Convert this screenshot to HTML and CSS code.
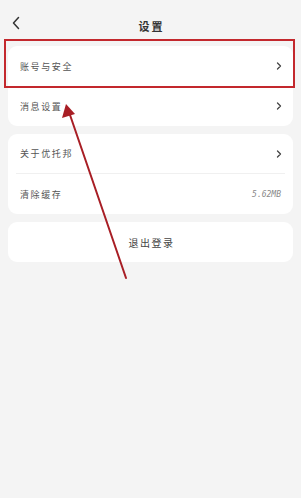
FILE: index.html
```html
<!DOCTYPE html>
<html lang="zh">
<head>
<meta charset="utf-8">
<link rel="stylesheet" href="styles.css">
</head>
<body>
<div class="page">
  <header class="header">
    <svg class="back" width="10" height="14" viewBox="0 0 10 14"><path d="M7.5 1.5 L2.5 7 L7.5 12.5" fill="none" stroke="#333" stroke-width="1.5" stroke-linecap="round" stroke-linejoin="round"/></svg>
    <div class="title">设置</div>
  </header>

  <section class="card">
    <div class="row"><span class="label">账号与安全</span><svg class="chev" width="6" height="8" viewBox="0 0 6 8"><path d="M1.5 1 L4.5 4 L1.5 7" fill="none" stroke="#444" stroke-width="1.3" stroke-linecap="round" stroke-linejoin="round"/></svg></div>
    <div class="row"><span class="label">消息设置</span><svg class="chev" width="6" height="8" viewBox="0 0 6 8"><path d="M1.5 1 L4.5 4 L1.5 7" fill="none" stroke="#444" stroke-width="1.3" stroke-linecap="round" stroke-linejoin="round"/></svg></div>
  </section>

  <section class="card">
    <div class="row divided"><span class="label">关于优托邦</span><svg class="chev" width="6" height="8" viewBox="0 0 6 8"><path d="M1.5 1 L4.5 4 L1.5 7" fill="none" stroke="#444" stroke-width="1.3" stroke-linecap="round" stroke-linejoin="round"/></svg></div>
    <div class="row"><span class="label">清除缓存</span><span class="value">5.62MB</span></div>
  </section>

  <section class="card center">
    <div class="row logout"><span class="label">退出登录</span></div>
  </section>

  <div class="highlight"></div>
  <svg class="arrow" width="301" height="498" viewBox="0 0 301 498">
    <line x1="126" y1="278" x2="69" y2="112" stroke="#a81e25" stroke-width="2" stroke-linecap="round"/>
    <polygon points="66,104 62,118 75,114" fill="#a81e25"/>
  </svg>
</div>
</body>
</html>
```

FILE: styles.css
```css
* { box-sizing: border-box; margin: 0; padding: 0; }
html, body { width: 301px; height: 498px; background: #f4f4f4; overflow: hidden; }
body { font-family: "Noto Sans CJK SC", "Noto Sans", sans-serif; color: #555; }
.page { position: relative; width: 301px; height: 498px; display: flex; flex-direction: column; gap: 8px; }
.header { height: 38px; position: relative; display: flex; align-items: flex-end; justify-content: center; padding-bottom: 4px; }
.back { position: absolute; left: 11px; top: 16px; }
.title { font-size: 11px; font-weight: 700; letter-spacing: 2px; color: #333; line-height: 16px; padding-left: 2px; }
.card { margin: 0 8px; background: #fff; border-radius: 9px; display: flex; flex-direction: column; }
.row { height: 40px; display: flex; align-items: center; justify-content: space-between; margin: 0 8px; padding: 0 4px; }
.row.divided { border-bottom: 1px solid #f0f0f0; }
.label { font-size: 9px; letter-spacing: 1.6px; color: #555; }
.chev { display: block; margin-right: -1px; }
.value { font-family: "DejaVu Sans Mono", monospace; font-size: 8px; font-style: italic; color: #888; }
.logout { justify-content: center; padding: 0; }
.logout .label { font-size: 10px; letter-spacing: 1.5px; color: #444; padding-left: 2px; }
.highlight { position: absolute; left: 4px; top: 39px; width: 291px; height: 49px; border: 2px solid #c3282d; }
.arrow { position: absolute; left: 0; top: 0; }
```
